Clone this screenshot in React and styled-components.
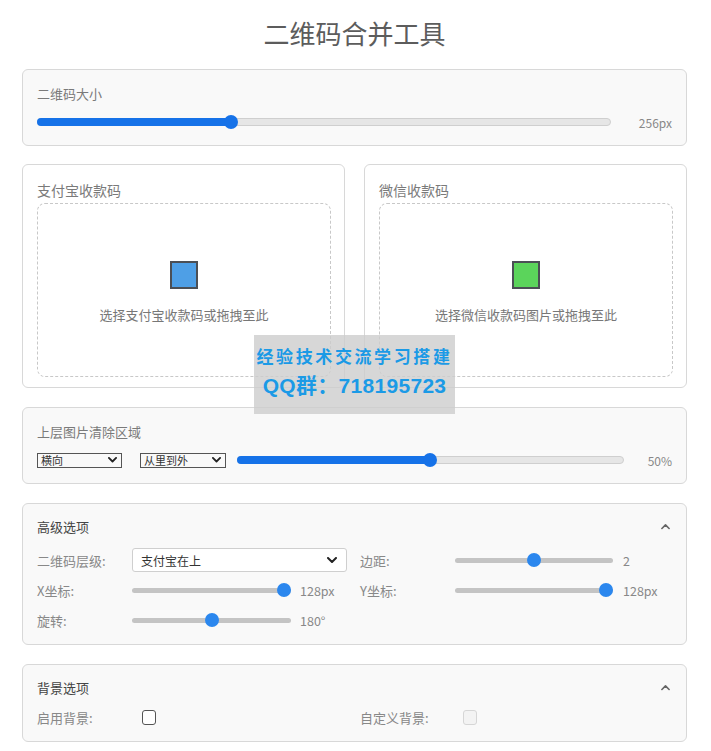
import React from 'react';
import styled, { createGlobalStyle } from 'styled-components';

const GlobalStyle = createGlobalStyle`
  body {
    margin: 0;
    background: #fff;
    font-family: "Noto Sans CJK SC", "Noto Sans", sans-serif;
  }
`;

const Page = styled.div`
  position: relative;
  width: 711px;
  padding: 13px 24px 0 22px;
  box-sizing: border-box;
`;

const Title = styled.h1`
  margin: 0 0 16px;
  height: 40px;
  line-height: 40px;
  text-align: center;
  font-size: 26px;
  font-weight: 400;
  color: #5c5c5c;
`;

const Card = styled.div`
  border: 1px solid #d8d8d8;
  border-radius: 6px;
  background: ${(p) => (p.$white ? '#fff' : '#f9f9f9')};
  padding: ${(p) => p.$pad || '14px 14px 13px'};
  margin-bottom: ${(p) => p.$mb || 19}px;
  box-sizing: border-box;
`;

const Label = styled.div`
  height: 20px;
  line-height: 20px;
  font-size: 13px;
  color: #7a7a7a;
`;

const Row = styled.div`
  display: flex;
  align-items: center;
  height: 20px;
  margin-top: 8px;
`;

const Value = styled.span`
  margin-left: ${(p) => p.$gap}px;
  font-size: 12px;
  color: #888;
  white-space: nowrap;
`;

const BigTrack = styled.div`
  position: relative;
  flex: 1;
  height: 6px;
  border-radius: 4px;
  background: #e6e6e6;
  border: 1px solid #cfcfcf;
`;

const BigFill = styled.div`
  position: absolute;
  left: -1px;
  top: -1px;
  bottom: -1px;
  border-radius: 4px;
  background: #1672e8;
`;

const Thumb = styled.div`
  position: absolute;
  top: 50%;
  width: ${(p) => p.$size}px;
  height: ${(p) => p.$size}px;
  margin-left: ${(p) => -p.$size / 2}px;
  margin-top: ${(p) => -p.$size / 2}px;
  border-radius: 50%;
  background: ${(p) => p.$color};
`;

const BigSlider = ({ pct }) => (
  <BigTrack>
    <BigFill style={{ width: `calc(7px + (100% - 14px) * ${pct})` }} />
    <Thumb $size={14} $color="#1672e8" style={{ left: `calc(7px + (100% - 14px) * ${pct})` }} />
  </BigTrack>
);

const SmallTrack = styled.div`
  position: relative;
  width: ${(p) => p.$w}px;
  height: 5px;
  border-radius: 3px;
  background: #c4c4c4;
  flex-shrink: 0;
`;

const SmallSlider = ({ pct, w = 159 }) => (
  <SmallTrack $w={w}>
    <Thumb $size={14} $color="#2b87ee" style={{ left: `${7 + (w - 14) * pct}px` }} />
  </SmallTrack>
);

const Pair = styled.div`
  display: flex;
  gap: 19px;
`;

const UploadCard = styled(Card)`
  flex: 1;
  height: 224px;
  display: flex;
  flex-direction: column;
`;

const UploadTitle = styled.div`
  height: 22px;
  line-height: 22px;
  font-size: 14px;
  color: #7a7a7a;
`;

const DropZone = styled.div`
  flex: 1;
  margin-top: 2px;
  border: 1px dashed #c8c8c8;
  border-radius: 8px;
  display: flex;
  flex-direction: column;
  align-items: center;
  padding-top: 57px;
`;

const QrIcon = styled.div`
  width: 24px;
  height: 24px;
  border: 2px solid #4b4f55;
  background: ${(p) => p.$color};
`;

const DropText = styled.div`
  margin-top: 16px;
  line-height: 20px;
  font-size: 13px;
  color: #777;
`;

const TinySelect = styled.div`
  display: flex;
  align-items: center;
  justify-content: space-between;
  width: ${(p) => p.$w}px;
  height: 13px;
  border: 1px solid #555;
  padding: 0 4px 0 3px;
  box-sizing: content-box;
  font-size: 11px;
  line-height: 13px;
  color: #333;
  margin-right: ${(p) => p.$mr || 0}px;
  flex-shrink: 0;
`;

const Chevron = ({ up, color = '#222', w = 9, sw = 2 }) => (
  <svg width={w} height={w * 0.6} viewBox="0 0 10 6">
    <polyline
      points={up ? '1,5 5,1 9,5' : '1,1 5,5 9,1'}
      fill="none"
      stroke={color}
      strokeWidth={sw}
      strokeLinecap="round"
      strokeLinejoin="round"
    />
  </svg>
);

const SectionHead = styled.div`
  display: flex;
  align-items: center;
  justify-content: space-between;
  height: 20px;
  line-height: 20px;
  font-size: 13px;
  color: #444;
  padding-right: 2px;
`;

const Grid = styled.div`
  display: grid;
  grid-template-columns: 310px 1fr;
  column-gap: 13px;
  row-gap: ${(p) => p.$rowGap || 6}px;
  margin-top: ${(p) => p.$mt || 11}px;
`;

const Field = styled.div`
  display: grid;
  grid-template-columns: ${(p) => p.$label || 95}px 1fr;
  align-items: center;
  height: 24px;
`;

const FieldLabel = styled.span`
  font-size: 13px;
  color: #888;
`;

const Control = styled.div`
  display: flex;
  align-items: center;
`;

const SmallValue = styled.span`
  margin-left: ${(p) => p.$gap || 9}px;
  font-size: 12.5px;
  color: #888;
`;

const Select = styled.div`
  display: flex;
  align-items: center;
  justify-content: space-between;
  height: 24px;
  box-sizing: border-box;
  border: 1px solid #cfcfcf;
  border-radius: 3px;
  background: #fff;
  padding: 0 9px 0 8px;
  font-size: 12px;
  color: #333;
`;

const Checkbox = styled.div`
  width: 14px;
  height: 15px;
  border: 1px solid ${(p) => (p.$disabled ? '#d6d6d6' : '#555')};
  background: ${(p) => (p.$disabled ? '#f3f3f3' : '#fff')};
  border-radius: 3px;
  box-sizing: border-box;
`;

const Watermark = styled.div`
  position: absolute;
  left: 254px;
  top: 335px;
  width: 201px;
  height: 79px;
  background: rgba(205, 205, 205, 0.8);
  color: #1b9ae6;
  font-weight: 700;
  text-align: center;
`;

const WmLine = styled.div`
  font-size: ${(p) => p.$size}px;
  line-height: ${(p) => p.$lh}px;
  letter-spacing: ${(p) => p.$ls}px;
  font-family: ${(p) => (p.$latin ? '"Liberation Sans", ' : '')}"Noto Sans CJK SC", sans-serif;
  padding-top: ${(p) => p.$pt || 0}px;
  white-space: nowrap;
`;

export default function App() {
  return (
    <>
      <GlobalStyle />
      <Page>
        <Title>二维码合并工具</Title>

        <Card $mb={18}>
          <Label>二维码大小</Label>
          <Row>
            <BigSlider pct={1 / 3} />
            <Value $gap={28}>256px</Value>
          </Row>
        </Card>

        <Pair>
          <UploadCard $white $pad="14px 13px 10px 14px">
            <UploadTitle>支付宝收款码</UploadTitle>
            <DropZone>
              <QrIcon $color="#4e9fe6" />
              <DropText>选择支付宝收款码或拖拽至此</DropText>
            </DropZone>
          </UploadCard>
          <UploadCard $white $pad="14px 13px 10px 14px">
            <UploadTitle>微信收款码</UploadTitle>
            <DropZone>
              <QrIcon $color="#5bd45b" />
              <DropText>选择微信收款码图片或拖拽至此</DropText>
            </DropZone>
          </UploadCard>
        </Pair>

        <Card>
          <Label>上层图片清除区域</Label>
          <Row>
            <TinySelect $w={76} $mr={18}>
              横向 <Chevron />
            </TinySelect>
            <TinySelect $w={77} $mr={11}>
              从里到外 <Chevron />
            </TinySelect>
            <BigSlider pct={0.5} />
            <Value $gap={24}>50%</Value>
          </Row>
        </Card>

        <Card $pad="13px 14px 12px">
          <SectionHead>
            高级选项 <Chevron up color="#666" w={9} sw={1.8} />
          </SectionHead>
          <Grid>
            <Field>
              <FieldLabel>二维码层级:</FieldLabel>
              <Select>
                支付宝在上 <Chevron w={10} />
              </Select>
            </Field>
            <Field>
              <FieldLabel>边距:</FieldLabel>
              <Control>
                <SmallSlider pct={0.5} w={158} />
                <SmallValue $gap={10}>2</SmallValue>
              </Control>
            </Field>
            <Field>
              <FieldLabel>X坐标:</FieldLabel>
              <Control>
                <SmallSlider pct={1} />
                <SmallValue>128px</SmallValue>
              </Control>
            </Field>
            <Field>
              <FieldLabel>Y坐标:</FieldLabel>
              <Control>
                <SmallSlider pct={1} w={158} />
                <SmallValue $gap={10}>128px</SmallValue>
              </Control>
            </Field>
            <Field>
              <FieldLabel>旋转:</FieldLabel>
              <Control>
                <SmallSlider pct={0.5} />
                <SmallValue>180°</SmallValue>
              </Control>
            </Field>
          </Grid>
        </Card>

        <Card $pad="13px 14px 12px">
          <SectionHead>
            背景选项 <Chevron up color="#666" w={9} sw={1.8} />
          </SectionHead>
          <Grid $mt={7}>
            <Field $label={105}>
              <FieldLabel>启用背景:</FieldLabel>
              <Checkbox />
            </Field>
            <Field $label={103}>
              <FieldLabel>自定义背景:</FieldLabel>
              <Checkbox $disabled />
            </Field>
          </Grid>
        </Card>

        <Watermark>
          <WmLine $size={17} $lh={22} $ls={2.6} $pt={10}>经验技术交流学习搭建</WmLine>
          <WmLine $size={21} $lh={26} $ls={0.3} $pt={6} $latin>QQ群：718195723</WmLine>
        </Watermark>
      </Page>
    </>
  );
}
